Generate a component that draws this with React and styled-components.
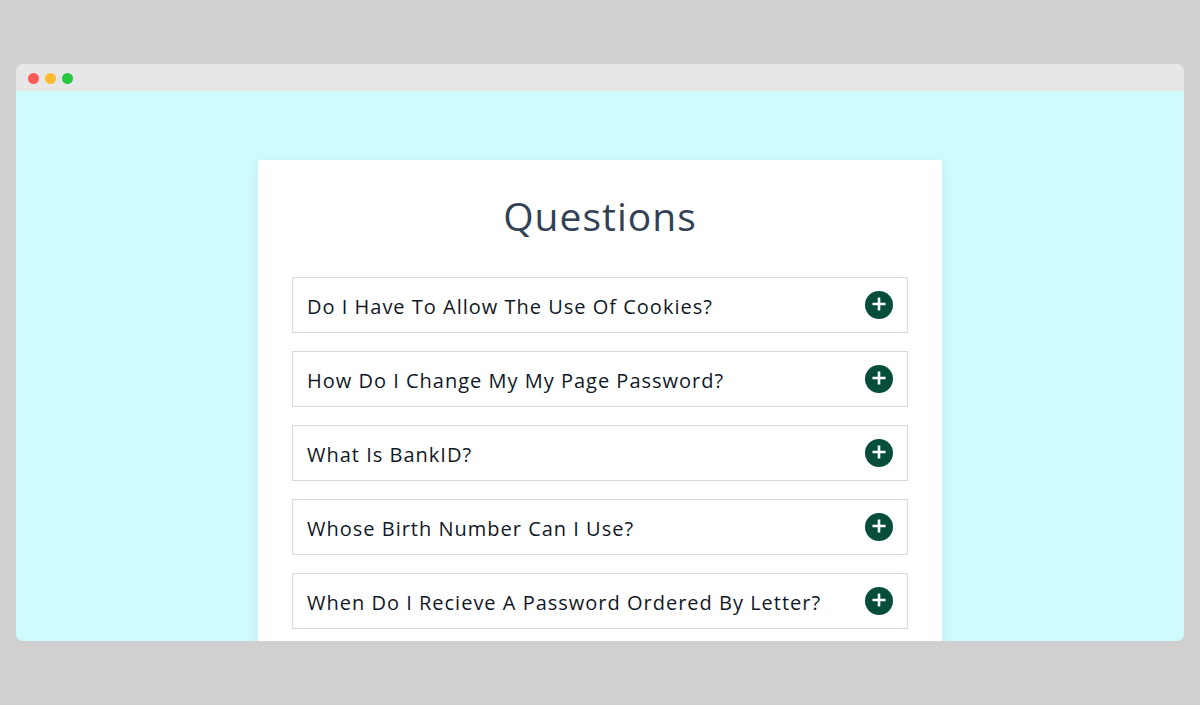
import React, { useState } from 'react';
import styled, { createGlobalStyle } from 'styled-components';

const GlobalStyle = createGlobalStyle`
  * {
    box-sizing: border-box;
    margin: 0;
  }
  body {
    background-color: #d0d0d0;
    font-family: 'Open Sans', 'Noto Sans', sans-serif;
  }
`;

const Page = styled.div`
  height: 100vh;
  padding: 64px 16px;
`;

const Window = styled.div`
  display: flex;
  flex-direction: column;
  height: 100%;
  border-radius: 7px;
  overflow: hidden;
`;

const TitleBar = styled.div`
  display: flex;
  flex-shrink: 0;
  align-items: center;
  gap: 6px;
  height: 27px;
  padding: 1px 12px 0;
  background-color: #e7e7e7;
`;

const Dot = styled.span`
  width: 11px;
  height: 11px;
  border-radius: 50%;
  background-color: ${(props) => props.$color};
`;

const Content = styled.main`
  flex: 1;
  min-height: 0;
  padding: 69px 16px;
  overflow: hidden;
  background-color: #cffafe;
`;

const Card = styled.section`
  max-width: 684px;
  margin: 0 auto;
  padding: 26px 34px;
  border-radius: 3px;
  background-color: white;
  box-shadow: 0 4px 14px rgba(0, 0, 0, 0.07);
`;

const Title = styled.h1`
  margin-bottom: 31px;
  color: #334155;
  font-size: 39px;
  font-weight: 400;
  letter-spacing: 1px;
  line-height: 60px;
  text-align: center;
`;

const List = styled.div`
  display: flex;
  flex-direction: column;
  gap: 18px;
`;

const Item = styled.article`
  padding: 0 14px;
  border: 1px solid #d3dce5;
`;

const ItemHeader = styled.header`
  display: flex;
  align-items: center;
  justify-content: space-between;
  min-height: 54px;
`;

const Question = styled.h2`
  padding-top: 4px;
  color: #111827;
  font-size: 20px;
  font-weight: 400;
  letter-spacing: 1px;
  line-height: 28px;
`;

const Answer = styled.p`
  padding-bottom: 14px;
  color: #334155;
  font-size: 16px;
  line-height: 24px;
`;

const ToggleButton = styled.button`
  display: flex;
  flex-shrink: 0;
  align-items: center;
  justify-content: center;
  width: 28px;
  height: 28px;
  padding: 0 0 2px;
  border: none;
  border-radius: 50%;
  background-color: #064e3b;
  color: white;
  cursor: pointer;
`;

const questions = [
  {
    id: 1,
    title: 'Do I Have To Allow The Use Of Cookies?',
    info: 'No, you can turn cookies off in the settings of your browser.',
  },
  {
    id: 2,
    title: 'How Do I Change My My Page Password?',
    info: 'Log in to My Page and choose a new password under your profile.',
  },
  {
    id: 3,
    title: 'What Is BankID?',
    info: 'BankID is an electronic ID for secure identification and signing.',
  },
  {
    id: 4,
    title: 'Whose Birth Number Can I Use?',
    info: 'You can only use your own birth number.',
  },
  {
    id: 5,
    title: 'When Do I Recieve A Password Ordered By Letter?',
    info: 'The letter normally arrives within a few working days.',
  },
];

const ToggleIcon = ({ open }) => (
  <svg width="14" height="14" viewBox="0 0 14 14" stroke="currentColor" strokeWidth="2.6" aria-hidden="true">
    <path d={open ? 'M0.5 7h13' : 'M0.5 7h13M7 0.5v13'} />
  </svg>
);

const SingleQuestion = ({ title, info }) => {
  const [open, setOpen] = useState(false);

  return (
    <Item>
      <ItemHeader>
        <Question>{title}</Question>
        <ToggleButton aria-label={title} aria-expanded={open} onClick={() => setOpen(!open)}>
          <ToggleIcon open={open} />
        </ToggleButton>
      </ItemHeader>
      {open && <Answer>{info}</Answer>}
    </Item>
  );
};

const App = () => {
  return (
    <>
      <GlobalStyle />
      <Page>
        <Window>
          <TitleBar>
            <Dot $color="#fc5b57" />
            <Dot $color="#fdbc2f" />
            <Dot $color="#28c840" />
          </TitleBar>
          <Content>
            <Card>
              <Title>Questions</Title>
              <List>
                {questions.map((question) => (
                  <SingleQuestion key={question.id} title={question.title} info={question.info} />
                ))}
              </List>
            </Card>
          </Content>
        </Window>
      </Page>
    </>
  );
};

export default App;
